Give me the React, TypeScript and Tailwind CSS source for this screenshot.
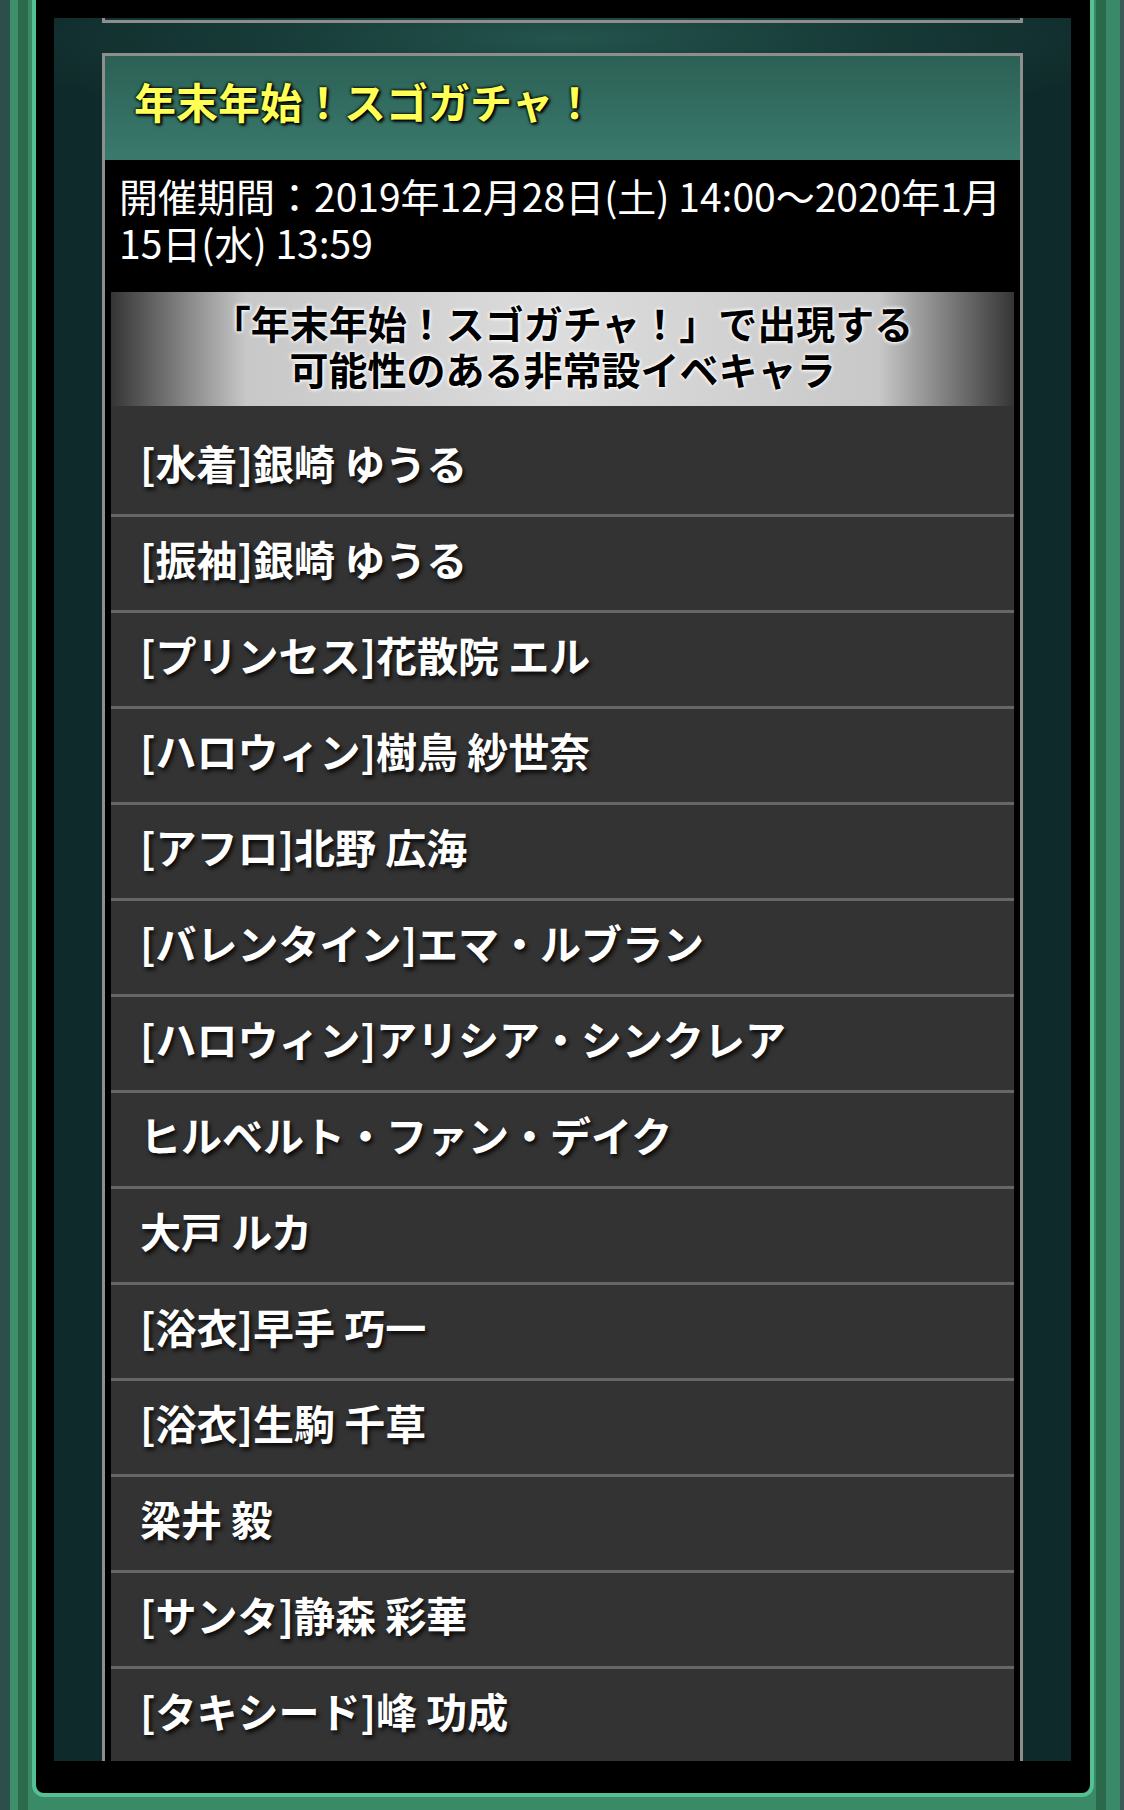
import React from "react";

const rows = [
  "[水着]銀崎 ゆうる",
  "[振袖]銀崎 ゆうる",
  "[プリンセス]花散院 エル",
  "[ハロウィン]樹鳥 紗世奈",
  "[アフロ]北野 広海",
  "[バレンタイン]エマ・ルブラン",
  "[ハロウィン]アリシア・シンクレア",
  "ヒルベルト・ファン・デイク",
  "大戸 ルカ",
  "[浴衣]早手 巧一",
  "[浴衣]生駒 千草",
  "梁井 毅",
  "[サンタ]静森 彩華",
  "[タキシード]峰 功成",
];

export default function App() {
  return (
    <div className="w-[1124px] h-[1810px] overflow-hidden font-['Noto_Sans_CJK_JP','Noto_Sans',sans-serif] bg-[linear-gradient(to_right,#2d4f4c_0px,#2d4f4c_10px,#3d8f6e_10px,#3d8f6e_18px,#2b6b4c_18px,#2b6b4c_28px,#3a8a68_28px,#3a8a68_1096px,#2a6a4a_1096px,#2a6a4a_1106px,#3a8a6a_1106px,#3a8a6a_1120px,#3a5a58_1120px)] pl-[32px] pr-[30px] pb-[13px]">
      <div className="h-full bg-black border-l-[4px] border-r-[4px] border-b-[4px] border-[#55c095] rounded-b-[12px] pt-[18px] pl-[18px] pr-[19px] pb-[32px]">
        <div className="h-full overflow-hidden px-[48px] bg-[radial-gradient(ellipse_600px_90px_at_50%_20px,#24544d_0%,#173b38_50%,#0f2a2a_100%)]">
          {/* previous card bottom edge */}
          <div className="h-[5px] border-l-[3px] border-r-[3px] border-b-[3px] border-[#8e8e8e]" />
          {/* card */}
          <div className="mt-[30px] border-[3px] border-[#8e8e8e] bg-black">
            <div className="h-[104px] flex items-center pl-[29px] pb-[14px] bg-[linear-gradient(to_bottom,#2c6055,#3a7a6d)]">
              <span className="text-[42px] leading-none font-bold text-[#ffff55] [text-shadow:0_0_3px_#000,0_0_3px_#000,2px_2px_3px_#000]">
                年末年始！スゴガチャ！
              </span>
            </div>
            <div className="h-[132px] pt-[12px] pl-[14px] pr-[8px] text-white text-[39px] leading-[47px] font-normal">
              開催期間：2019年12月28日(土) 14:00〜2020年1月
              <br />
              15日(水) 13:59
            </div>
            <div className="px-[6px]">
              <div className="h-[114px] pt-[7px] flex flex-col items-center bg-[linear-gradient(to_right,#353535_0%,#c8c8c8_15%,#dcdcdc_50%,#c8c8c8_85%,#353535_100%)] text-black font-bold text-[39px] leading-[46px] [text-shadow:0_0_4px_#fff,0_0_4px_#fff,0_0_2px_#fff]">
                <div>「年末年始！スゴガチャ！」で出現する</div>
                <div>可能性のある非常設イベキャラ</div>
              </div>
              <div className="bg-[#333333] pt-[15px]">
                {rows.map((r) => (
                  <div
                    key={r}
                    className="h-[96px] border-b-[3px] border-[#666666] pl-[29px] pt-[11px] text-white font-bold text-[41px] leading-[60px] [text-shadow:2px_3px_4px_rgba(0,0,0,0.85)]"
                  >
                    {r}
                  </div>
                ))}
              </div>
            </div>
          </div>
        </div>
      </div>
    </div>
  );
}
